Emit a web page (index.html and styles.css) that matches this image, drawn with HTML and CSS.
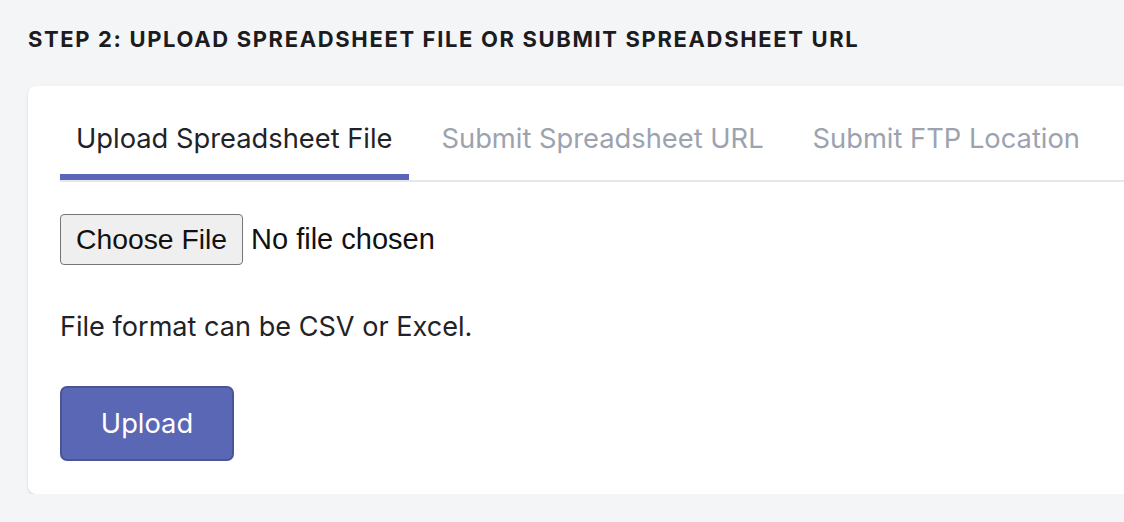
FILE: index.html
```html
<!DOCTYPE html>
<html lang="en">
<head>
<meta charset="utf-8">
<title>Step 2</title>
<link rel="stylesheet" href="styles.css">
</head>
<body>
<main class="page">
  <h2 class="step-title">Step 2: Upload spreadsheet file or submit spreadsheet URL</h2>
  <section class="card">
    <nav class="tabs">
      <a class="tab tab-active">Upload Spreadsheet File</a>
      <a class="tab">Submit Spreadsheet URL</a>
      <a class="tab">Submit FTP Location</a>
    </nav>
    <div class="file-row">
      <span class="file-btn">Choose File</span>
      <span class="file-name">No file chosen</span>
    </div>
    <p class="hint">File format can be CSV or Excel.</p>
    <button class="upload-btn" type="button">Upload</button>
  </section>
</main>
</body>
</html>
```
FILE: styles.css
```css
html, body {
  margin: 0;
  padding: 0;
  background: #f4f5f7;
  font-family: Inter, "Noto Sans", sans-serif;
  overflow: hidden;
}
.page {
  padding: 27px 0 0 28px;
}
.step-title {
  margin: 0;
  font-size: 22px;
  line-height: 24px;
  font-weight: 700;
  text-transform: uppercase;
  letter-spacing: 1.64px;
  color: #1c1c1e;
}
.card {
  margin-top: 35px;
  width: 1140px;
  background: #fff;
  border-radius: 8px;
  box-shadow: 0 1px 3px rgba(0,0,0,0.10), 0 1px 2px rgba(0,0,0,0.06);
  padding: 22px 0 33px 32px;
  box-sizing: border-box;
}
.tabs {
  display: flex;
  gap: 17px;
  border-bottom: 2px solid #e5e7eb;
}
.tab {
  padding: 16px 16px 20px;
  font-size: 27.3px;
  line-height: 30px;
  color: #9ca3af;
  border-bottom: 6px solid transparent;
  white-space: nowrap;
}
.tab-active {
  color: #1f2328;
  border-bottom-color: #5a67b8;
}
.file-row {
  display: flex;
  align-items: center;
  gap: 8px;
  margin-top: 32px;
}
.file-btn {
  box-sizing: border-box;
  height: 51px;
  padding: 0 15px;
  display: inline-flex;
  align-items: center;
  background: #efefef;
  border: 1.5px solid #767676;
  border-radius: 4px;
  font-family: "Liberation Sans", Arial, sans-serif;
  font-size: 28.3px;
  color: #111;
}
.file-name {
  font-family: "Liberation Sans", Arial, sans-serif;
  font-size: 29px;
  color: #111;
}
.hint {
  margin: 44px 0 41px;
  font-size: 27.1px;
  line-height: 36px;
  color: #1f2328;
}
.upload-btn {
  display: block;
  width: 174px;
  height: 75px;
  background: #5a67b5;
  border: 2px solid #4a5596;
  border-radius: 7px;
  color: #fff;
  font-family: Inter, "Noto Sans", sans-serif;
  font-size: 27.3px;
}
```
